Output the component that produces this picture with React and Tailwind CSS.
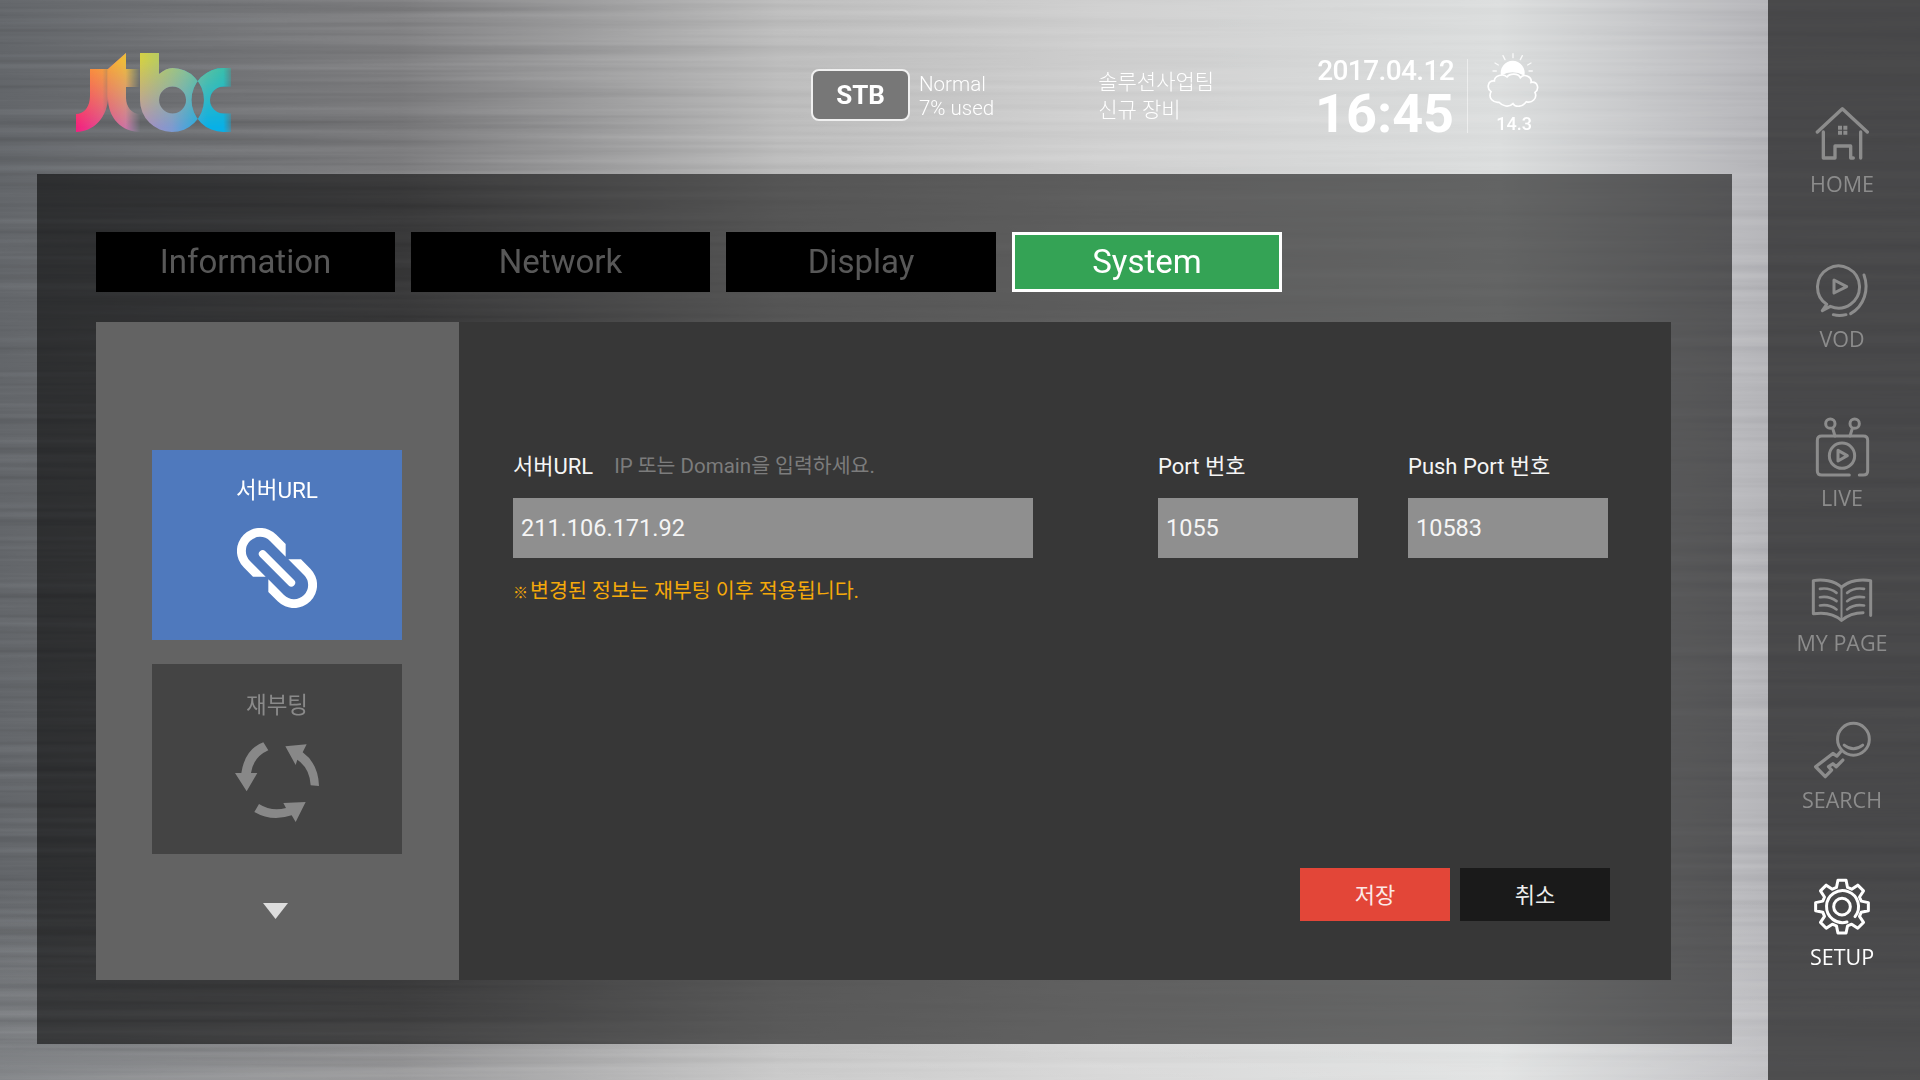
// JTBC set-top box setup screen
const gearPath = (() => {
  const cx = 247, cy = 678, teeth = 8;
  const pts = [];
  for (let i = 0; i < teeth; i++) {
    const a = (i / teeth) * Math.PI * 2 - Math.PI / 2;
    const step = (Math.PI * 2) / teeth;
    [[-0.31, 60], [-0.17, 80], [0.17, 80], [0.31, 60]].forEach(([k, r]) => {
      const t = a + k * step * 1.15;
      pts.push(`${(cx + Math.cos(t) * r).toFixed(1)} ${(cy + Math.sin(t) * r).toFixed(1)}`);
    });
  }
  return `M${pts.join(' L')} Z`;
})();

function Logo() {
  const shape =
    'M90 69 H108 V96 C108 118 93 132 76 132 V114 C84 114 90 107 90 96 Z ' +
    'M108 69 L126 53 V69 H140 V87 H126 V98 C126 107 132 114 140 114 V132 C122 132 108 118 108 98 Z ' +
    'M140 53 H159 V74 C164 70 168 68 172.5 68 A32 32 0 1 1 140 100 Z M172.5 86.5 A13.5 13.5 0 1 0 172.6 113.5 A13.5 13.5 0 1 0 172.5 86.5 Z ' +
    'M231 68 H223.5 A32 32 0 0 0 223.5 132 H231 V113.5 H223.5 A13.5 13.5 0 0 1 223.5 86.5 H231 Z';
  return (
    <svg width="155" height="79" viewBox="76 53 155 79" className="shrink-0">
      <defs>
        <linearGradient id="logoTop" gradientUnits="userSpaceOnUse" x1="76" x2="231" y1="0" y2="0">
          <stop offset="0" stopColor="#ff8a30" />
          <stop offset="0.3" stopColor="#f0b93a" />
          <stop offset="0.41" stopColor="#d4cf45" />
          <stop offset="0.7" stopColor="#93c48a" />
          <stop offset="1" stopColor="#30c0a8" />
        </linearGradient>
        <linearGradient id="logoBottom" gradientUnits="userSpaceOnUse" x1="76" x2="231" y1="0" y2="0">
          <stop offset="0" stopColor="#f5207e" />
          <stop offset="0.3" stopColor="#d070a0" />
          <stop offset="0.41" stopColor="#b08cc0" />
          <stop offset="0.62" stopColor="#7e9ad0" />
          <stop offset="0.85" stopColor="#08b0e8" />
          <stop offset="1" stopColor="#08b0e8" />
        </linearGradient>
        <linearGradient id="logoFadeV" x1="0" x2="0" y1="0" y2="1">
          <stop offset="0.1" stopColor="#fff" />
          <stop offset="0.95" stopColor="#000" />
        </linearGradient>
        <linearGradient id="logoFadeH" gradientUnits="userSpaceOnUse" x1="76" x2="231" y1="0" y2="0">
          <stop offset="0.17" stopColor="#fff" />
          <stop offset="0.2" stopColor="#bbb" />
          <stop offset="0.205" stopColor="#fff" />
          <stop offset="0.32" stopColor="#fff" />
          <stop offset="0.41" stopColor="#111" />
          <stop offset="0.41" stopColor="#fff" />
          <stop offset="0.95" stopColor="#fff" />
          <stop offset="1" stopColor="#555" />
        </linearGradient>
        <mask id="logoMaskV" maskUnits="userSpaceOnUse" x="76" y="53" width="155" height="79">
          <rect x="76" y="53" width="155" height="79" fill="url(#logoFadeV)" />
        </mask>
        <mask id="logoMaskH" maskUnits="userSpaceOnUse" x="76" y="53" width="155" height="79">
          <rect x="76" y="53" width="155" height="79" fill="url(#logoFadeH)" />
        </mask>
        <clipPath id="logoClip">
          <path d={shape} clipRule="evenodd" />
        </clipPath>
      </defs>
      <g mask="url(#logoMaskH)">
        <g clipPath="url(#logoClip)">
          <rect x="76" y="53" width="155" height="79" fill="url(#logoBottom)" />
          <rect x="76" y="53" width="155" height="79" fill="url(#logoTop)" mask="url(#logoMaskV)" />
        </g>
      </g>
    </svg>
  );
}

function WeatherIcon() {
  return (
    <svg width="70" height="70" viewBox="0 0 210 210" className="shrink-0" fill="none" stroke="#fff" strokeLinecap="round">
      <path d="M66 92 A36 36 0 1 1 136 92 Q100 72 66 92 Z" fill="#fff" stroke="none" />
      <path d="M102 26 V38 M72 32 L78 44 M130 32 L124 44 M48 54 L58 60 M156 54 L146 60 M42 78 H52 M150 78 H160" strokeWidth="4" opacity="0.85" />
      <path
        d="M60 172 C44 174 26 160 36 140 C22 130 26 106 46 108 C46 92 72 84 84 96 C92 84 118 84 124 98 C136 84 160 96 156 112 C176 108 182 132 168 142 C176 160 158 176 142 170 C132 186 110 188 102 176 C90 188 70 184 60 172 Z"
        strokeWidth="5"
        fill="rgba(255,255,255,0.08)"
      />
    </svg>
  );
}

const navIconClass = 'block shrink-0';

function HomeIcon() {
  return (
    <svg width="55" height="55" viewBox="165 82 165 165" className={navIconClass} fill="none" stroke="currentColor" strokeWidth="10" strokeLinecap="round" strokeLinejoin="round">
      <path d="M172 160 L247 90 L322 160" />
      <path d="M190 160 V238 H225 V202 H272 V238 H280" />
      <path d="M302 160 V238" />
      <path d="M234 141 h12 v12 h-12 z M250 141 h12 v12 h-12 z M234 156 h12 v12 h-12 z M250 156 h12 v12 h-12 z" fill="currentColor" stroke="none" />
    </svg>
  );
}

function VodIcon() {
  return (
    <svg width="55" height="55" viewBox="165 545 165 165" className={navIconClass} fill="none" stroke="currentColor" strokeWidth="9" strokeLinecap="round" strokeLinejoin="round">
      <path d="M211 675 A63 63 0 1 0 200 669 L187 688 Z" />
      <path d="M312 581 C328 625 312 675 272 697" />
      <path d="M220 700 Q238 705 258 700" />
      <path d="M222 596 L260 616 L222 635 Z" />
    </svg>
  );
}

function LiveIcon() {
  return (
    <svg width="55" height="60" viewBox="165 108 165 180" className={navIconClass} fill="none" stroke="currentColor" strokeWidth="9" strokeLinecap="round" strokeLinejoin="round">
      <circle cx="211" cy="128" r="14" />
      <circle cx="284" cy="128" r="14" />
      <path d="M218 142 L225 165 M277 142 L270 165" />
      <path d="M268 282 H185 Q172 282 172 270 V178 Q172 165 185 165 H310 Q323 165 323 178 V270 Q323 282 310 282 H298" />
      <circle cx="246" cy="224" r="38" />
      <path d="M234 208 L262 224 L234 240 Z" />
    </svg>
  );
}

function BookIcon() {
  return (
    <svg width="63" height="47" viewBox="155 585 190 140" className={navIconClass} fill="none" stroke="currentColor" strokeWidth="9" strokeLinecap="round" strokeLinejoin="round">
      <path d="M247 615 C225 595 190 590 162 595 V695 C195 690 225 695 247 715 C265 700 290 692 312 692" />
      <path d="M247 615 V715" strokeWidth="6" />
      <path d="M247 615 C270 595 305 590 335 595 V700" />
      <path d="M182 620 Q210 615 232 632 M182 645 Q210 640 232 657 M182 670 Q210 665 232 682" strokeWidth="8" />
      <path d="M315 620 Q285 615 264 632 M315 645 Q285 640 264 657 M315 670 Q285 665 264 682" strokeWidth="8" />
    </svg>
  );
}

function SearchIcon() {
  return (
    <svg width="58" height="58" viewBox="160 120 175 175" className={navIconClass} fill="none" stroke="currentColor" strokeWidth="9" strokeLinecap="round" strokeLinejoin="round">
      <circle cx="282" cy="175" r="48" />
      <path d="M254 193 Q282 215 310 193" />
      <path d="M244 212 L232 226 L220 218 L168 258 L197 288 L216 268 L207 258 L220 249 L230 258 L250 238" strokeWidth="10" />
    </svg>
  );
}

function GearIcon() {
  return (
    <svg width="56" height="58" viewBox="163 592 168 174" className={navIconClass} fill="none" stroke="currentColor" strokeWidth="9" strokeLinecap="round" strokeLinejoin="round">
      <path d={gearPath} />
      <path d="M262 724 A48 48 0 1 1 286 708" />
      <circle cx="247" cy="678" r="25" />
    </svg>
  );
}

function NavItem({ icon, label, className, gap = 'mt-[7px]' }) {
  return (
    <div className={`flex flex-col items-center ${className}`}>
      {icon}
      <span className={`${gap} font-['Open_Sans',sans-serif] text-[21.5px] leading-[28px]`}>{label}</span>
    </div>
  );
}

function LinkIcon() {
  const half = 'M167 72 L139 44 A69 69 0 0 0 41 142 L69 170 L107 170 L60 123 A42 42 0 0 1 120 63 L167 110 Z';
  return (
    <svg width="80" height="80" viewBox="21 24 240 240" className="block" fill="#fff">
      <path d={half} />
      <path d={half} transform="rotate(180 141 144)" />
      <path d="M98 102 L184 188" stroke="#fff" strokeWidth="23" strokeLinecap="round" />
    </svg>
  );
}

function RebootIcon() {
  return (
    <svg width="85" height="80" viewBox="285 905 255 240" className="block" fill="#888">
      <path d="M370 906 Q315 925 304 998 L285 998 L320 1053 L352 998 L333 998 Q340 950 385 930 Z" />
      <path d="M436 918 L500 912 L488 936 Q535 970 537 1037 L512 1035 Q510 985 472 958 L467 974 Z" />
      <path d="M343 1115 L357 1091 Q395 1115 438 1103 L430 1088 L497 1085 L467 1145 L455 1125 Q395 1145 343 1115 Z" />
    </svg>
  );
}

const tabs = [
  { name: 'Information', width: 'w-[299px]' },
  { name: 'Network', width: 'w-[299px]' },
  { name: 'Display', width: 'w-[270px]' },
];

function Field({ value, className }) {
  return (
    <div className={`h-[60px] bg-[#8f8f8f] flex items-center pt-[2px] px-[8px] text-[23.5px] text-[#f5f5f5] ${className}`}>
      {value}
    </div>
  );
}

export default function App() {
  return (
    <div className="relative w-[1920px] h-[1080px] overflow-hidden flex font-['Roboto','Noto_Sans_CJK_KR',sans-serif] bg-[linear-gradient(180deg,transparent_880px,rgba(255,255,255,0.2)_1080px),linear-gradient(90deg,#63666a_0px,#7c7c7e_400px,#bcbcbc_780px,#d0d0d0_1100px,#dcdede_1500px,#b4b4b8_1768px,#b4b4b8_1920px)]">
      {/* brushed metal streaks behind everything */}
      <svg className="absolute inset-0 w-full h-full mix-blend-overlay opacity-[0.16]" aria-hidden="true">
        <filter id="brush" x="0" y="0" width="100%" height="100%" colorInterpolationFilters="sRGB">
          <feTurbulence type="fractalNoise" baseFrequency="0.0012 0.11" numOctaves="3" seed="7" />
          <feColorMatrix values="1 0 0 0 0 1 0 0 0 0 1 0 0 0 0 0 0 0 0 1" />
        </filter>
        <rect width="100%" height="100%" filter="url(#brush)" />
      </svg>

      <main className="relative w-[1768px] shrink-0">
        <header className="h-[174px] flex items-start pt-[53px] pl-[76px] text-white">
          <Logo />
          <div className="ml-[580px] mt-[16px] w-[99px] h-[52px] bg-[#777] border-2 border-[#f0f0f0] rounded-[8px] flex items-center justify-center text-[26px] font-bold">
            STB
          </div>
          <div className="ml-[9px] mt-[19px] text-[20.5px] leading-[24px] font-light">
            <div>Normal</div>
            <div>7% used</div>
          </div>
          <div className="ml-[104px] mt-[15px] text-[21px] leading-[28px] font-light">
            <div>솔루션사업팀</div>
            <div>신규 장비</div>
          </div>
          <div className="ml-[105px] flex flex-col items-end w-[135px]">
            <div className="text-[28px] leading-[36px] font-medium tracking-[-0.6px]">2017.04.12</div>
            <div className="text-[54px] leading-[46px] mt-[2px] font-bold">16:45</div>
          </div>
          <div className="ml-[13px] mt-[6px] w-px h-[74px] bg-white/50" />
          <div className="ml-[11px] -mt-[8px] flex flex-col items-center w-[70px]">
            <WeatherIcon />
            <div className="-mt-[1px] text-[18px] leading-[20px] font-medium">14.3</div>
          </div>
        </header>

        <section className="ml-[37px] w-[1695px] h-[870px] bg-black/[0.55] pt-[58px] pl-[59px]">
          <nav className="flex gap-4 h-[60px]">
            {tabs.map((t) => (
              <div key={t.name} className={`${t.width} bg-black flex items-center justify-center text-[33px] text-[#585858]`}>
                {t.name}
              </div>
            ))}
            <div className="w-[270px] bg-[#34a355] border-[3px] border-white flex items-center justify-center text-[33px] text-white">
              System
            </div>
          </nav>

          <div className="mt-[30px] w-[1575px] h-[658px] flex">
            <aside className="w-[363px] shrink-0 bg-[#636363] pt-[128px] pl-[56px]">
              <div className="w-[250px] h-[190px] bg-[#4f79bd] flex flex-col items-center pt-[26px] text-white">
                <div className="text-[22.5px] leading-[28px]">서버URL</div>
                <div className="mt-[24px]"><LinkIcon /></div>
              </div>
              <div className="mt-[24px] w-[250px] h-[190px] bg-[#444] flex flex-col items-center pt-[27px] text-[#8a8a8a]">
                <div className="text-[22.5px] leading-[28px]">재부팅</div>
                <div className="mt-[23px]"><RebootIcon /></div>
              </div>
              <svg width="25" height="16" viewBox="0 0 25 16" className="mt-[49px] ml-[111px] block">
                <path d="M0 0 H25 L12.5 16 Z" fill="#ddd" />
              </svg>
            </aside>

            <div className="flex-1 bg-[#373737] flex flex-col pl-[54px] pr-[61px] pb-[59px]">
              <div className="mt-[128px] flex">
                <div className="w-[520px] shrink-0">
                  <div className="h-[32px] flex items-center gap-[21px]">
                    <span className="text-[22px] text-[#f5f5f5]">서버URL</span>
                    <span className="text-[20.5px] text-[#7c7c7c]">IP 또는 Domain을 입력하세요.</span>
                  </div>
                  <Field value="211.106.171.92" className="mt-[16px]" />
                  <div className="mt-[16px] text-[20.6px] leading-[34px] text-[#f5a90a]">
                    <span className="inline-block w-[17px] text-[15px] font-bold">※</span>변경된 정보는 재부팅 이후 적용됩니다.
                  </div>
                </div>
                <div className="ml-[125px] w-[200px] shrink-0">
                  <div className="h-[32px] flex items-center text-[22px] text-[#f5f5f5]">Port 번호</div>
                  <Field value="1055" className="mt-[16px]" />
                </div>
                <div className="ml-[50px] w-[200px] shrink-0">
                  <div className="h-[32px] flex items-center text-[22px] text-[#f5f5f5]">Push Port 번호</div>
                  <Field value="10583" className="mt-[16px]" />
                </div>
              </div>
              <div className="mt-auto flex justify-end gap-[10px] text-[22px]">
                <button className="w-[150px] h-[53px] pt-[2px] bg-[#e34638] text-[#fbe9e7]">저장</button>
                <button className="w-[150px] h-[53px] pt-[2px] bg-[#1a1a1a] text-[#eee]">취소</button>
              </div>
            </div>
          </div>
        </section>
      </main>

      <aside className="relative w-[152px] shrink-0 bg-black/60 flex flex-col items-center pr-[4px] text-[#8c8c8c]">
        <NavItem icon={<HomeIcon />} label="HOME" className="mt-[106px]" gap="mt-[9px]" />
        <NavItem icon={<VodIcon />} label="VOD" className="mt-[65px]" />
        <NavItem icon={<LiveIcon />} label="LIVE" className="mt-[64px]" />
        <NavItem icon={<BookIcon />} label="MY PAGE" className="mt-[65px]" gap="mt-[5px]" />
        <NavItem icon={<SearchIcon />} label="SEARCH" className="mt-[64px]" />
        <NavItem icon={<GearIcon />} label="SETUP" className="mt-[64px] text-white" />
      </aside>
    </div>
  );
}
